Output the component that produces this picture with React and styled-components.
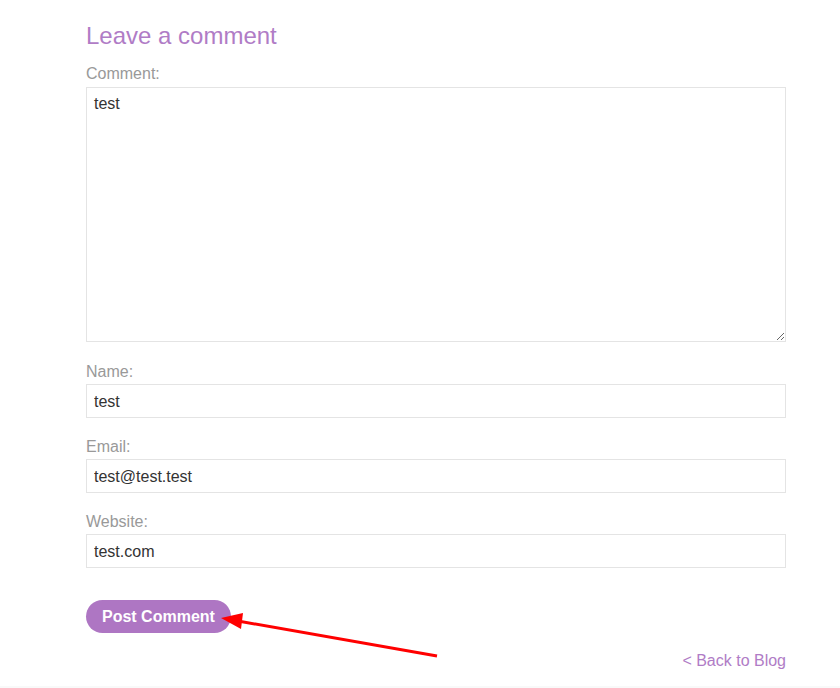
import React from 'react';
import styled, { createGlobalStyle } from 'styled-components';

const GlobalStyle = createGlobalStyle`
    body {
        margin: 0;
        background: #fff;
        font-family: "Liberation Sans", Arial, sans-serif;
    }
`;

const Page = styled.div`
    position: relative;
    height: 688px;
    overflow: hidden;
    border-bottom: 2px solid #f9f9f9;
    box-sizing: border-box;
`;

const Section = styled.div`
    width: 700px;
    margin-left: 86px;
    padding-top: 22px;
`;

const Title = styled.h2`
    margin: 0;
    font-size: 24px;
    line-height: 28px;
    font-weight: normal;
    color: #b07cc6;
`;

const Label = styled.label`
    display: block;
    margin-top: ${props => props.$top}px;
    margin-bottom: ${props => props.$bottom || 3}px;
    font-size: 16px;
    line-height: 19px;
    color: #999;
`;

const TextArea = styled.textarea`
    display: block;
    width: 100%;
    height: 255px;
    box-sizing: border-box;
    border: 1px solid #e4e4e4;
    padding: 6px 7px;
    font-family: "Liberation Sans", Arial, sans-serif;
    font-size: 16px;
    line-height: 19px;
    color: #333;
    resize: vertical;
    outline: none;
`;

const Input = styled.input`
    display: block;
    width: 100%;
    height: 34px;
    box-sizing: border-box;
    border: 1px solid #e4e4e4;
    padding: 2px 7px 0;
    font-family: "Liberation Sans", Arial, sans-serif;
    font-size: 16px;
    color: #333;
    outline: none;
`;

const Button = styled.button`
    display: block;
    margin-top: 32px;
    height: 33px;
    padding: 0 16px;
    border: none;
    border-radius: 17px;
    background: #ae76c3;
    color: #fff;
    font-family: "Liberation Sans", Arial, sans-serif;
    font-size: 16px;
    font-weight: bold;
`;

const BackLink = styled.a`
    display: block;
    margin-top: 18px;
    text-align: right;
    font-size: 16px;
    line-height: 19px;
    color: #b07cc6;
    text-decoration: none;
`;

const Arrow = styled.svg`
    position: absolute;
    left: 0;
    top: 0;
    pointer-events: none;
`;

const App = () => {
    return (
        <Page>
            <GlobalStyle />
            <Section>
                <Title>Leave a comment</Title>
                <Label $top={14} $bottom={4}>Comment:</Label>
                <TextArea defaultValue="test" />
                <Label $top={20}>Name:</Label>
                <Input defaultValue="test" />
                <Label $top={19}>Email:</Label>
                <Input defaultValue="test@test.test" />
                <Label $top={19}>Website:</Label>
                <Input defaultValue="test.com" />
                <Button>Post Comment</Button>
                <BackLink href="#">&lt; Back to Blog</BackLink>
            </Section>
            <Arrow width="840" height="688">
                <line x1="437" y1="656" x2="238" y2="621" stroke="#ff0000" strokeWidth="3" />
                <polygon points="221,618 243,613 241,629" fill="#ff0000" />
            </Arrow>
        </Page>
    );
};

export default App;
